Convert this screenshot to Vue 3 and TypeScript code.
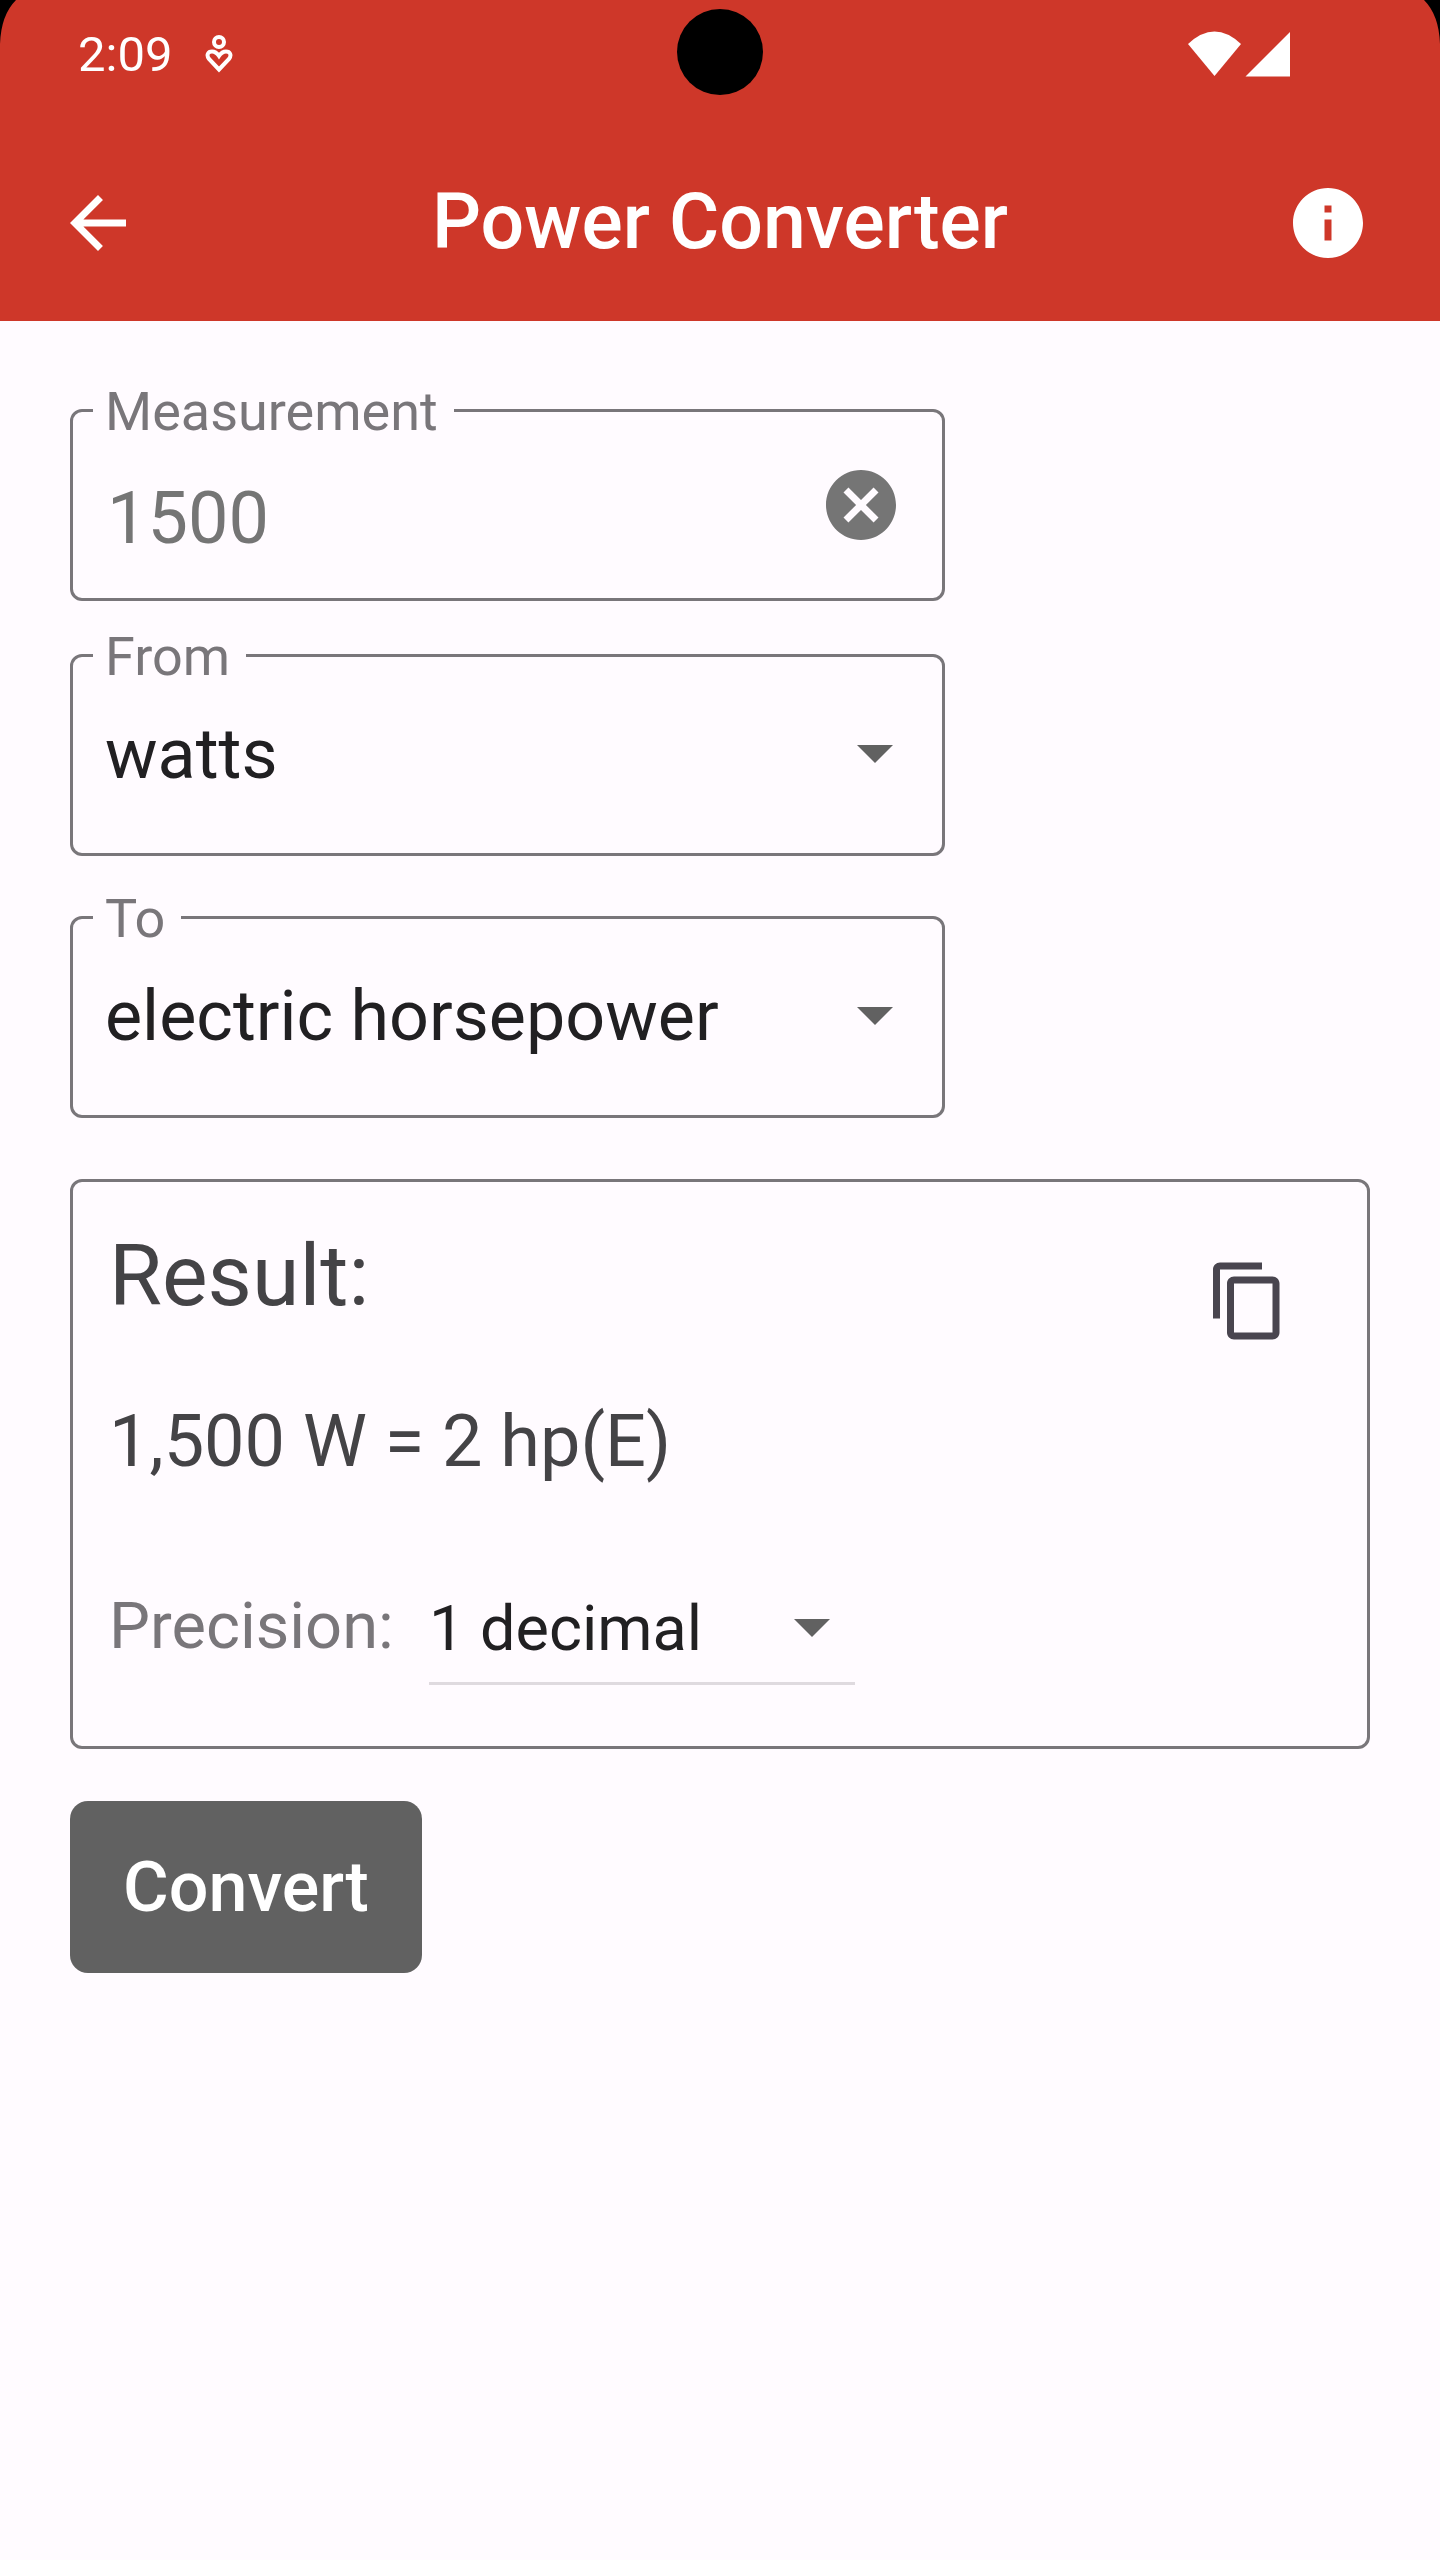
<script setup lang="ts">
import { computed, ref } from 'vue'

interface Unit {
  name: string
  symbol: string
  watts: number
}

const units: Unit[] = [
  { name: 'watts', symbol: 'W', watts: 1 },
  { name: 'kilowatts', symbol: 'kW', watts: 1000 },
  { name: 'electric horsepower', symbol: 'hp(E)', watts: 746 },
]

const measurement = ref('1500')
const fromName = ref('watts')
const toName = ref('electric horsepower')
const precision = ref(1)

const find = (name: string): Unit => units.find((u) => u.name === name) ?? units[0]

const result = ref('')

function convert(): void {
  const amount = Number(measurement.value)
  const from = find(fromName.value)
  const to = find(toName.value)
  const value = (amount * from.watts) / to.watts
  const shown = value.toLocaleString('en-US', { maximumFractionDigits: precision.value })
  result.value = `${amount.toLocaleString('en-US')} ${from.symbol} = ${shown} ${to.symbol}`
}

convert()

const precisions = computed(() =>
  [1, 2, 3, 4].map((n) => ({ value: n, label: n === 1 ? '1 decimal' : `${n} decimals` })),
)
</script>

<template>
  <div class="screen">
    <header class="top">
      <svg class="corner left" viewBox="0 0 16 44" aria-hidden="true"><path d="M0 0H16Q1 15 0 44Z" /></svg>
      <svg class="corner right" viewBox="0 0 16 44" aria-hidden="true"><path d="M16 0H0Q15 15 16 44Z" /></svg>
      <span class="camera" aria-hidden="true"></span>

      <div class="status">
        <span class="time">2:09</span>
        <svg class="wellbeing" viewBox="0 0 28 40" aria-hidden="true">
          <circle cx="14" cy="8" r="5" />
          <path d="M14 35.500L4 25C1 21 3 17.500 7 17.500C10 17.500 12 19 14 22C16 19 18 17.500 21 17.500C25 17.500 27 21 24 25Z" />
        </svg>
        <svg class="signals" viewBox="0 0 102 46" aria-hidden="true">
          <path d="M0 13Q26.500 -12 53 13L26.500 45Z" />
          <path d="M102 1V45.500H57.500Z" />
        </svg>
      </div>

      <div class="bar">
        <button class="icon-button back" type="button" aria-label="Back">
          <svg viewBox="0 0 24 24"><path d="M20 11H7.830l5.590-5.590L12 4l-8 8 8 8 1.410-1.410L7.830 13H20v-2z" /></svg>
        </button>
        <h1>Power Converter</h1>
        <button class="icon-button" type="button" aria-label="Information">
          <svg viewBox="0 0 24 24"><path d="M12 2C6.480 2 2 6.480 2 12s4.480 10 10 10 10-4.480 10-10S17.520 2 12 2zm1 15h-2v-6h2v6zm0-8h-2V7h2v2z" /></svg>
        </button>
      </div>
    </header>

    <main>
      <form @submit.prevent="convert">
        <div class="fields">
          <fieldset>
            <legend><label for="measurement">Measurement</label></legend>
            <div class="entry">
              <input id="measurement" v-model="measurement" type="text" inputmode="decimal" />
              <button class="icon-button clear" type="button" aria-label="Clear" @click="measurement = ''">
                <svg viewBox="0 0 24 24"><path d="M12 2C6.470 2 2 6.470 2 12s4.470 10 10 10 10-4.470 10-10S17.530 2 12 2zm5 13.590L15.590 17 12 13.410 8.410 17 7 15.590 10.590 12 7 8.410 8.410 7 12 10.590 15.590 7 17 8.410 13.410 12 17 15.590z" /></svg>
              </button>
            </div>
          </fieldset>

          <fieldset class="unit">
            <legend><label for="from">From</label></legend>
            <div class="picker">
              <select id="from" v-model="fromName">
                <option v-for="u in units" :key="u.name" :value="u.name">{{ u.name }}</option>
              </select>
              <svg class="caret" viewBox="0 0 36 18" aria-hidden="true"><path d="M0 0H36L18 18Z" /></svg>
            </div>
          </fieldset>

          <fieldset class="unit">
            <legend><label for="to">To</label></legend>
            <div class="picker">
              <select id="to" v-model="toName">
                <option v-for="u in units" :key="u.name" :value="u.name">{{ u.name }}</option>
              </select>
              <svg class="caret" viewBox="0 0 36 18" aria-hidden="true"><path d="M0 0H36L18 18Z" /></svg>
            </div>
          </fieldset>
        </div>

        <section class="result">
          <div class="result-head">
            <h2>Result:</h2>
            <button class="icon-button copy" type="button" aria-label="Copy result">
              <svg viewBox="0 0 24 24"><path d="M16 1H4c-1.100 0-2 .9-2 2v14h2V3h12V1zm3 4H8c-1.100 0-2 .9-2 2v14c0 1.100.9 2 2 2h11c1.100 0 2-.9 2-2V7c0-1.100-.9-2-2-2zm0 16H8V7h11v14z" /></svg>
            </button>
          </div>
          <output for="measurement from to">{{ result }}</output>
          <div class="precision">
            <label for="precision">Precision:</label>
            <div class="picker">
              <select id="precision" v-model="precision">
                <option v-for="p in precisions" :key="p.value" :value="p.value">{{ p.label }}</option>
              </select>
              <svg class="caret" viewBox="0 0 36 18" aria-hidden="true"><path d="M0 0H36L18 18Z" /></svg>
            </div>
          </div>
        </section>

        <button class="convert" type="submit">Convert</button>
      </form>
    </main>
  </div>
</template>

<style>
body {
  margin: 0;
  background: #fffbff;
}
</style>

<style scoped>
.screen {
  min-height: 100vh;
  background: #fffbff;
  font-family: Roboto, 'Liberation Sans', sans-serif;
  color: #444346;
}

button,
input,
select {
  margin: 0;
  padding: 0;
  border: 0;
  background: none;
  font: inherit;
  color: inherit;
}

.top {
  position: relative;
  background: #ce3729;
  color: #fff;
}

.corner {
  position: absolute;
  top: 0;
  width: 16px;
  height: 44px;
  fill: #000;
}

.left {
  left: 0;
}

.right {
  right: 0;
}

.camera {
  position: absolute;
  top: 9px;
  left: calc(50% - 43px);
  width: 86px;
  height: 86px;
  border-radius: 50%;
  background: #000;
}

.status {
  display: flex;
  align-items: center;
  height: 108px;
  padding: 0 150px 0 78px;
}

.time {
  font-size: 49px;
}

.wellbeing {
  width: 28px;
  height: 40px;
  margin-left: 33px;
  fill: none;
  stroke: currentColor;
  stroke-width: 4;
}

.signals {
  width: 102px;
  height: 46px;
  margin-left: auto;
  fill: currentColor;
}

.bar {
  display: flex;
  align-items: center;
  justify-content: space-between;
  padding: 69px 70px 53px 56px;
}

.icon-button {
  display: block;
  flex: none;
}

.icon-button svg {
  display: block;
  width: 84px;
  height: 84px;
  fill: currentColor;
}

.back {
  padding-right: 14px;
}

h1 {
  margin: 0;
  font-size: 77px;
  font-weight: 500;
  line-height: 91px;
}

main {
  padding: 58px 70px;
}

.fields {
  display: grid;
  grid-template-columns: 35fr 17fr;
}

fieldset {
  grid-column: 1;
  min-width: 0;
  margin: 0;
  padding: 0;
  border: 3px solid #79767a;
  border-radius: 12px;
}

.unit {
  margin-top: 23px;
  padding-bottom: 32px;
}

.unit + .unit {
  margin-top: 30px;
}

legend {
  margin-left: 20px;
  padding: 4px 16px 0 12px;
  font-size: 54px;
  line-height: 58px;
  color: #79767a;
}

.entry {
  display: flex;
  align-items: center;
  height: 155px;
  padding: 0 39px 2px 34px;
  color: #757575;
}

input {
  flex: 1;
  min-width: 0;
  font-size: 72px;
}

.clear {
  padding-bottom: 28px;
}

.picker {
  display: grid;
  align-items: center;
}

.picker > * {
  grid-area: 1 / 1;
}

select {
  appearance: none;
  width: 100%;
  height: 135px;
  padding: 0 100px 0 32px;
  font-size: 70px;
  color: #212022;
}

.caret {
  justify-self: end;
  width: 36px;
  height: 18px;
  margin-right: 49px;
  fill: #616161;
  pointer-events: none;
}

.result {
  margin-top: 61px;
  padding: 35px 77px 61px 36px;
  border: 3px solid #79767a;
  border-radius: 12px;
}

.result-head {
  display: flex;
  justify-content: space-between;
}

h2 {
  margin: 0;
  font-size: 86px;
  font-weight: 400;
  line-height: 118px;
}

.copy {
  padding-top: 42px;
  color: #49454f;
}

output {
  display: block;
  margin-top: 50px;
  font-size: 72px;
  line-height: 98px;
}

.precision {
  display: grid;
  grid-template-columns: 320px 426px;
  align-items: center;
  margin-top: 80px;
}

.precision label {
  padding-bottom: 4px;
  font-size: 65px;
  color: #79767a;
}

.precision select {
  height: 114px;
  padding: 4px 60px 0 0;
  border-bottom: 3px solid #dfdadf;
  font-size: 63px;
}

.precision .caret {
  margin-right: 25px;
}

.convert {
  display: block;
  height: 172px;
  margin-top: 52px;
  padding: 0 53px;
  border-radius: 18px;
  background: #616161;
  font-size: 70px;
  font-weight: 500;
  color: #fff;
}
</style>
